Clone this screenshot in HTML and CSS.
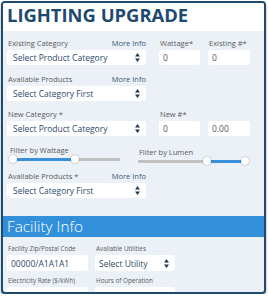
FILE: index.html
```html
<!DOCTYPE html>
<html lang="en">
<head>
<meta charset="UTF-8">
<meta name="viewport" content="width=device-width, initial-scale=1.0">
<title>Lighting Upgrade</title>
<link rel="stylesheet" href="styles.css">
</head>
<body>
<div class="card">
    <div class="card-head">
        <h1>LIGHTING UPGRADE</h1>
    </div>
    <div class="section">
        <div class="row">
            <div class="field wide">
                <div class="label-line"><label>Existing Category</label><a href="#">More Info</a></div>
                <div class="select"><span>Select Product Category</span><svg class="arrows" width="5" height="9" viewBox="0 0 5 9"><path d="M2.5 0L5 3.6H0Z M0 5.4H5L2.5 9Z"/></svg></div>
            </div>
            <div class="field num"><label>Wattage*</label><input type="text" value="0"></div>
            <div class="field num"><label>Existing #*</label><input type="text" value="0"></div>
        </div>
        <div class="row">
            <div class="field wide">
                <div class="label-line"><label>Available Products</label><a href="#">More Info</a></div>
                <div class="select"><span>Select Category First</span><svg class="arrows" width="5" height="9" viewBox="0 0 5 9"><path d="M2.5 0L5 3.6H0Z M0 5.4H5L2.5 9Z"/></svg></div>
            </div>
        </div>
        <div class="row">
            <div class="field wide">
                <div class="label-line"><label>New Category *</label></div>
                <div class="select"><span>Select Product Category</span><svg class="arrows" width="5" height="9" viewBox="0 0 5 9"><path d="M2.5 0L5 3.6H0Z M0 5.4H5L2.5 9Z"/></svg></div>
            </div>
            <div class="field num"><label>New #*</label><input type="text" value="0"></div>
            <div class="field num"><label>&nbsp;</label><input type="text" value="0.00"></div>
        </div>
        <div class="filters">
            <div class="filter">
                <label>Filter by Wattage</label>
                <div class="slider">
                    <div class="track"></div>
                    <div class="fill" style="left:0;width:58.4%"></div>
                    <span class="thumb" style="left:0"></span>
                    <span class="thumb" style="left:58.4%"></span>
                </div>
            </div>
            <div class="filter lumen">
                <label>Filter by Lumen</label>
                <div class="slider">
                    <div class="track"></div>
                    <div class="fill" style="left:64.5%;width:35.5%"></div>
                    <span class="thumb" style="left:64.5%"></span>
                    <span class="thumb" style="left:100%"></span>
                </div>
            </div>
        </div>
        <div class="row">
            <div class="field wide">
                <div class="label-line"><label>Available Products *</label><a href="#">More Info</a></div>
                <div class="select"><span>Select Category First</span><svg class="arrows" width="5" height="9" viewBox="0 0 5 9"><path d="M2.5 0L5 3.6H0Z M0 5.4H5L2.5 9Z"/></svg></div>
            </div>
        </div>
    </div>
    <div class="bar">Facility Info</div>
    <div class="facility">
        <div class="frow">
            <div class="ffield"><label>Facility Zip/Postal Code</label><input type="text" class="dark" value="00000/A1A1A1"></div>
            <div class="ffield"><label>Available Utilities</label><div class="select"><span>Select Utility</span><svg class="arrows" width="5" height="9" viewBox="0 0 5 9"><path d="M2.5 0L5 3.6H0Z M0 5.4H5L2.5 9Z"/></svg></div></div>
        </div>
        <div class="frow">
            <div class="ffield"><label>Electricity Rate ($/kWh)</label><input type="text" class="dark" value="Utility Default"></div>
            <div class="ffield"><label>Hours of Operation</label><input type="text" value="0"></div>
        </div>
    </div>
</div>
</body>
</html>
```

FILE: styles.css
```css
body {
    margin: 0;
    background-color: #fff;
    font-family: "Open Sans", Arial, sans-serif;
}
.card {
    margin: 1px 0 0 1px;
    width: 265px;
    height: 293px;
    box-sizing: border-box;
    border: 2px solid #1d4a6e;
    border-radius: 4px;
    overflow: hidden;
    background-color: #ebf1f7;
    box-shadow: 0 2px 3px rgba(0, 0, 0, 0.35);
}
.card-head {
    background-color: #fff;
    height: 28px;
    padding-left: 4px;
}
h1 {
    margin: 0;
    font-size: 18.4px;
    line-height: 24px;
    font-weight: 700;
    color: #1d4a6e;
}
.section {
    padding: 7px 0 10px 4px;
}
.row {
    display: flex;
    margin-bottom: 8.5px;
}
.field {
    display: flex;
    flex-direction: column;
}
.field label, .label-line {
    display: block;
    height: 10px;
    line-height: 10px;
    font-size: 7.5px;
    color: #5a5a5a;
    margin-bottom: 2px;
    padding-left: 1px;
}
.label-line {
    display: flex;
    justify-content: space-between;
    padding-left: 0;
}
.label-line label {
    margin: 0;
}
.label-line a {
    color: #3a5675;
    text-decoration: none;
}
.wide {
    width: 139px;
}
.num {
    width: 41px;
    margin-left: 13px;
}
.num + .num {
    width: 42px;
    margin-left: 8px;
}
.select, input {
    box-sizing: border-box;
    height: 15px;
    background-color: #fff;
    border: none;
    border-radius: 2px;
    font-family: "Open Sans", Arial, sans-serif;
    font-size: 8.5px;
    margin: 0;
}
.select {
    display: flex;
    align-items: center;
    justify-content: space-between;
    padding: 0 6px 0 6px;
    color: #2c4a6a;
}
.arrows {
    fill: #1f3c5a;
}
input {
    width: 100%;
    padding: 0 0 0 4px;
    color: #555;
    outline: none;
}
input.dark {
    color: #2c4a6a;
}
.filters {
    display: flex;
    align-items: flex-start;
    margin-bottom: 5px;
}
.filter {
    width: 110px;
    margin-left: 3px;
}
.filter label {
    display: block;
    height: 10px;
    line-height: 10px;
    font-size: 7.5px;
    color: #5a5a5a;
}
.lumen {
    margin-left: 18px;
    margin-top: 2px;
}
.lumen label {
    padding-left: 1px;
}
.slider {
    position: relative;
    height: 9px;
    width: 107px;
    margin-left: 3px;
}
.lumen .slider {
    margin-left: 0;
}
.track, .fill {
    position: absolute;
    top: 3px;
    height: 3px;
}
.track {
    left: 0;
    right: 0;
    background-color: #c1c1c1;
}
.fill {
    background-color: #3a8fd8;
}
.thumb {
    position: absolute;
    top: 0.5px;
    width: 8px;
    height: 8px;
    margin-left: -4px;
    box-sizing: border-box;
    border-radius: 50%;
    background-color: #fff;
    box-shadow: 0 0 1.5px rgba(0, 0, 0, 0.45);
}
.bar {
    height: 21px;
    line-height: 21px;
    padding-left: 4px;
    background-color: #3290da;
    color: #fff;
    font-size: 15.3px;
    font-weight: 300;
}
.facility {
    padding: 8px 0 0 4px;
}
.frow {
    display: flex;
    margin-bottom: 6px;
}
.ffield {
    width: 81px;
    display: flex;
    flex-direction: column;
}
.ffield + .ffield {
    width: 80px;
    margin-left: 7px;
}
.ffield label {
    display: block;
    height: 8px;
    line-height: 8px;
    font-size: 6.3px;
    color: #5a5a5a;
    margin-bottom: 2px;
    padding-left: 1px;
}
.ffield .select, .ffield input {
    height: 16px;
}
.ffield .select {
    padding-left: 4px;
    padding-right: 6px;
}
```
